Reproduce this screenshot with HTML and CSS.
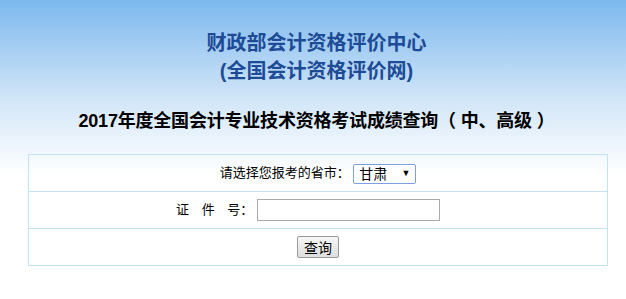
FILE: index.html
```html
<!DOCTYPE html>
<html>
    <head>
        <meta charset="utf-8">
        <title>成绩查询</title>
        <link rel="stylesheet" href="styles.css">
    </head>
    <body>
        <div class="header">
            <h1>财政部会计资格评价中心<br>(全国会计资格评价网)</h1>
            <h2>2017年度全国会计专业技术资格考试成绩查询（ 中、高级 ）</h2>
        </div>
        <table class="query">
            <tr>
                <td>请选择您报考的省市：
                    <span class="sel-wrap">
                        <select class="sel">
                            <option>甘肃</option>
                        </select>
                    </span>
                </td>
            </tr>
            <tr>
                <td class="id-row"><span class="spaced">证 件 号：</span>
                    <input type="text" class="txt">
                </td>
            </tr>
            <tr>
                <td><button class="btn">查询</button></td>
            </tr>
        </table>
    </body>
</html>
```
FILE: styles.css
```css
* {
    margin: 0;
    padding: 0;
    box-sizing: border-box;
}

body {
    font-family: "Liberation Sans", "Noto Sans CJK SC", sans-serif;
    font-size: 13px;
    color: #000;
    background: linear-gradient(180deg, #7cb8ee 0px, #d2e6f8 100px, #ffffff 175px) no-repeat;
    min-height: 299px;
}

.header {
    text-align: center;
    padding-top: 29px;
    padding-left: 7px;
}

.header h1 {
    font-size: 20px;
    line-height: 28px;
    color: #1d4b96;
    font-weight: bold;
}

.header h2 {
    font-size: 18px;
    line-height: 24px;
    margin-top: 24px;
    font-weight: bold;
    letter-spacing: -0.2px;
}

.query {
    width: 580px;
    margin: 21px 0 0 28px;
    border-collapse: collapse;
    border: 1px solid #c2e4f2;
}

.query td {
    height: 37px;
    text-align: center;
    border: 1px solid #c2e4f2;
}

.query td.id-row {
    padding-right: 20px;
}

.spaced {
    word-spacing: 9px;
}

.sel-wrap {
    position: relative;
    display: inline-block;
    vertical-align: middle;
}

.sel-wrap::after {
    content: "▼";
    position: absolute;
    right: 6px;
    top: 4px;
    font-size: 9px;
    pointer-events: none;
}

.sel {
    appearance: none;
    -webkit-appearance: none;
    width: 63px;
    height: 20px;
    padding-left: 5px;
    font-size: 14px;
    font-family: inherit;
    border: 1px solid #7b9ee6;
    border-radius: 2px;
    background: #fff;
    color: #000;
}

.txt {
    width: 183px;
    height: 22px;
    border: 1px solid #a9a9a9;
    vertical-align: middle;
}

.btn {
    width: 42px;
    height: 22px;
    font-size: 14px;
    font-family: inherit;
    border: 1px solid #999;
    border-radius: 2px;
    background: linear-gradient(#f6f6f6, #dedede);
}
```
